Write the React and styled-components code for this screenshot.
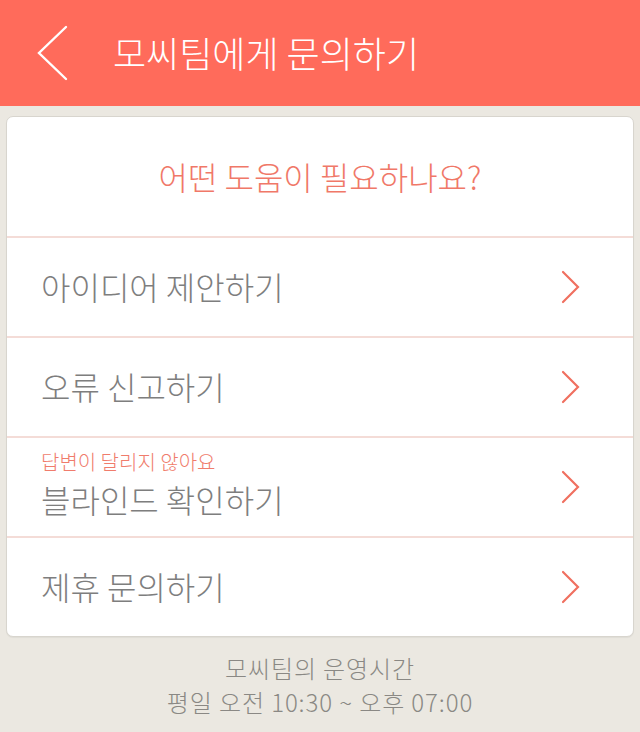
import styled, { createGlobalStyle } from "styled-components";

const GlobalStyle = createGlobalStyle`
  html, body {
    margin: 0;
    padding: 0;
    background: #ebe8e1;
  }
  body {
    font-family: "Noto Sans CJK KR", "Noto Sans", sans-serif;
  }
`;

const Page = styled.div`
  width: 640px;
  min-height: 732px;
  background: #ebe8e1;
  display: flex;
  flex-direction: column;
`;

const Header = styled.header`
  height: 106px;
  background: #ff6b5b;
  display: flex;
  align-items: center;
  padding-left: 37px;
  gap: 42px;
  box-sizing: border-box;
`;

const Title = styled.h1`
  margin: 0;
  font-size: 36px;
  font-weight: 300;
  color: #fff;
  line-height: 1;
  padding-bottom: 2px;
`;

const Card = styled.section`
  margin: 10px 6px 0;
  background: #fff;
  border: 1px solid #d8d5ce;
  border-radius: 7px;
  overflow: hidden;
  box-shadow: 0 1px 1px rgba(0, 0, 0, 0.05);
`;

const Question = styled.div`
  height: 119px;
  display: flex;
  align-items: center;
  justify-content: center;
  font-size: 32px;
  font-weight: 300;
  color: #f07868;
  padding-bottom: 2px;
  box-sizing: border-box;
`;

const Row = styled.div`
  height: 100px;
  border-top: 2px solid #f4dcd7;
  display: flex;
  align-items: center;
  justify-content: space-between;
  padding: 0 52px 0 34px;
  box-sizing: border-box;
`;

const Labels = styled.div`
  display: flex;
  flex-direction: column;
  padding-bottom: ${(p) => (p.$hint ? "0" : "2px")};
  margin-top: ${(p) => (p.$hint ? "-6px" : "0")};
`;

const Hint = styled.span`
  font-size: 20px;
  font-weight: 300;
  color: #f07c6c;
  line-height: 29px;
`;

const Label = styled.span`
  font-size: 32px;
  font-weight: 300;
  color: #7e7e7e;
  line-height: 46px;
`;

const Footer = styled.footer`
  padding-top: 14px;
  text-align: center;
  color: #8a8884;
  font-size: 24px;
  font-weight: 300;
  line-height: 34px;
  letter-spacing: 0.9px;
`;

const BackIcon = () => (
  <svg width="34" height="56" viewBox="0 0 34 56">
    <polyline
      points="29,2 2,28 29,54"
      fill="none"
      stroke="#fff"
      strokeWidth="2.4"
      strokeLinecap="round"
      strokeLinejoin="miter"
    />
  </svg>
);

const Chevron = () => (
  <svg width="20" height="34" viewBox="0 0 20 34">
    <polyline
      points="2,2 17,17 2,32"
      fill="none"
      stroke="#f07060"
      strokeWidth="2.2"
      strokeLinecap="round"
    />
  </svg>
);

const items = [
  { label: "아이디어 제안하기" },
  { label: "오류 신고하기" },
  { label: "블라인드 확인하기", hint: "답변이 달리지 않아요" },
  { label: "제휴 문의하기" },
];

export default function App() {
  return (
    <Page>
      <GlobalStyle />
      <Header>
        <BackIcon />
        <Title>모씨팀에게 문의하기</Title>
      </Header>
      <Card>
        <Question>어떤 도움이 필요하나요?</Question>
        {items.map((item) => (
          <Row key={item.label}>
            <Labels $hint={!!item.hint}>
              {item.hint && <Hint>{item.hint}</Hint>}
              <Label>{item.label}</Label>
            </Labels>
            <Chevron />
          </Row>
        ))}
      </Card>
      <Footer>
        모씨팀의 운영시간
        <br />
        평일 오전 10:30 ~ 오후 07:00
      </Footer>
    </Page>
  );
}
